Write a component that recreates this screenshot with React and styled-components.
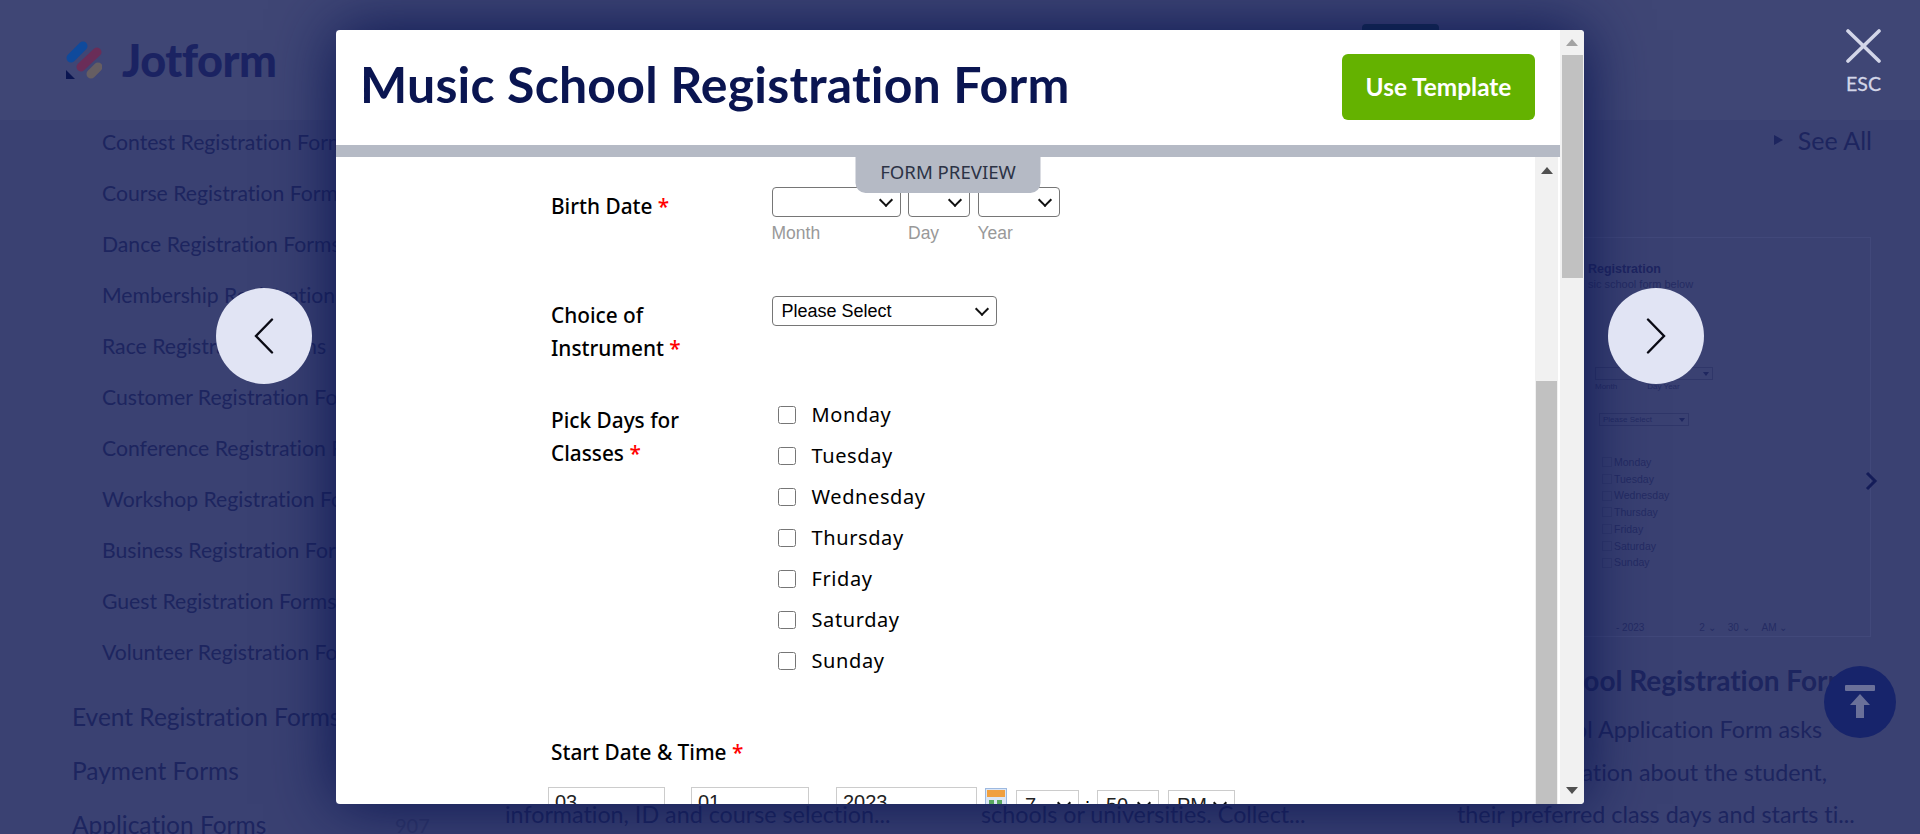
import React from 'react';
import styled, { createGlobalStyle } from 'styled-components';

const GlobalStyle = createGlobalStyle`
  html, body {
    margin: 0;
    height: 100%;
    overflow: hidden;
  }
  * {
    box-sizing: border-box;
  }
`;

const sans = `Lato, 'Noto Sans', sans-serif`;
const ink = '#1d255f';

const Page = styled.div`
  position: relative;
  width: 1920px;
  height: 834px;
  overflow: hidden;
  background: #3a4172;
  color: ${ink};
  font-family: ${sans};
  font-variant-ligatures: none;
`;

/* ---- page behind the popup ---- */

const Header = styled.header`
  height: 120px;
  background: #3f4675;
  display: flex;
  align-items: flex-start;
  justify-content: space-between;
  padding: 41px 481px 0 66px;
`;

const Logo = styled.div`
  display: flex;
  align-items: center;
  gap: 20px;
  height: 38px;
`;

const LogoWord = styled.span`
  font-size: 45px;
  font-weight: 900;
  letter-spacing: -0.5px;
  color: #1b2362;
`;

const SignUp = styled.div`
  width: 77px;
  height: 40px;
  margin-top: -17px;
  border-radius: 4px;
  background: #132c50;
`;

const Body = styled.div`
  display: grid;
  grid-template-columns: 505px 1fr;
`;

const Sidebar = styled.nav`
  display: flex;
  flex-direction: column;
  padding-left: 72px;
`;

const SubItem = styled.div`
  height: 46px;
  margin-bottom: 5px;
  padding-left: 30px;
  line-height: 45px;
  font-size: 21.2px;
  white-space: nowrap;
`;

const TopItem = styled.div`
  display: grid;
  grid-template-columns: 323px auto;
  height: 54px;
  line-height: 54px;
  font-size: 24.5px;
  white-space: nowrap;
  margin-top: ${p => (p.$first ? '9px' : '0')};
`;

const Count = styled.span`
  font-size: 20px;
  color: #2f3669;
`;

const Main = styled.main`
  display: flex;
  flex-direction: column;
`;

const SeeAll = styled.div`
  height: 40px;
  padding-right: 48px;
  display: flex;
  justify-content: flex-end;
  align-items: center;
  gap: 15px;
  font-size: 25px;
`;

const CaretRight = styled.span`
  width: 0;
  height: 0;
  border-left: 9px solid ${ink};
  border-top: 5px solid transparent;
  border-bottom: 5px solid transparent;
`;

const Cards = styled.div`
  display: grid;
  grid-template-columns: repeat(3, 414px);
  column-gap: 62px;
  margin-top: 77px;
`;

const Card = styled.article`
  display: flex;
  flex-direction: column;
`;

const Thumb = styled.div`
  position: relative;
  height: 400px;
  border: 1px solid #41487a;
  padding: 23px 0 0 130px;
  font-family: 'Liberation Sans', sans-serif;
  color: #252c63;
  overflow: hidden;
`;

const ThumbHeading = styled.div`
  font-size: 12.5px;
  font-weight: 700;
  line-height: 16px;
  color: #1e2560;
`;

const ThumbLead = styled.div`
  font-size: 11px;
  line-height: 14px;
  white-space: nowrap;
`;

const ThumbSelect = styled.div`
  display: flex;
  justify-content: flex-end;
  align-items: center;
  width: ${p => p.$width}px;
  height: 13px;
  margin: ${p => p.$margin};
  padding-right: 3px;
  border: 1px solid #2f3669;
  font-size: 8px;
  line-height: 11px;
  &::before {
    content: '${p => p.$label || ''}';
    flex: 1;
    padding-left: 3px;
  }
  &::after {
    content: '';
    border-left: 3px solid transparent;
    border-right: 3px solid transparent;
    border-top: 4px solid #1f2760;
  }
`;

const ThumbSubs = styled.div`
  display: flex;
  gap: 30px;
  margin: 2px 0 0 7px;
  font-size: 8px;
  line-height: 10px;
`;

const ThumbDays = styled.div`
  margin: 28px 0 0 14px;
  font-size: 10.5px;
  line-height: 16.7px;
`;

const ThumbDay = styled.div`
  display: flex;
  align-items: center;
  gap: 2px;
  &::before {
    content: '';
    width: 8px;
    height: 8px;
    border: 1px solid #333a6c;
  }
`;

const ThumbDate = styled.div`
  display: flex;
  align-items: center;
  gap: 12px;
  margin: 51px 0 0 28px;
  font-size: 10px;
  white-space: nowrap;
`;

const ThumbYear = styled.span`
  margin-right: 43px;
`;

const CardChevron = styled.svg`
  position: absolute;
  right: 42px;
  top: 471px;
`;

const CardTitle = styled.h3`
  margin: 23px 0 0;
  height: 40px;
  line-height: 40px;
  font-size: 28px;
  font-weight: 700;
  white-space: nowrap;
  overflow: hidden;
`;

const CardText = styled.div`
  margin-top: 8px;
  font-size: 23.3px;
  line-height: 42.5px;
`;

const CardLine = styled.div`
  white-space: nowrap;
`;

/* ---- popup ---- */

const Modal = styled.div`
  position: absolute;
  left: 336px;
  top: 30px;
  width: 1248px;
  height: 774px;
  display: flex;
  background: #fff;
  border-radius: 4px;
  overflow: hidden;
`;

const ModalShadow = styled.div`
  position: absolute;
  left: 336px;
  top: 30px;
  width: 1248px;
  height: 774px;
  box-shadow: 0 0 60px #0a1551;
`;

const ModalMain = styled.div`
  flex: 1;
  min-width: 0;
  display: flex;
  flex-direction: column;
`;

const ModalHead = styled.div`
  height: 115px;
  display: flex;
  align-items: flex-start;
  justify-content: space-between;
  padding: 24px 25px 0 24px;
`;

const ModalTitle = styled.h1`
  margin: 0;
  font-family: ${sans};
  font-size: 50px;
  font-weight: 700;
  letter-spacing: 0.2px;
  line-height: 60px;
  color: #0a1551;
  white-space: nowrap;
`;

const UseTemplate = styled.button`
  width: 193px;
  height: 66px;
  border: 0;
  border-radius: 6px;
  padding: 0 0 2px;
  background: #64b200;
  color: #fff;
  font-family: ${sans};
  font-size: 24.4px;
  font-weight: 700;
  font-variant-ligatures: none;
`;

const Divider = styled.div`
  position: relative;
  height: 12px;
  background: #b5bac5;
`;

const PreviewTab = styled.div`
  position: absolute;
  z-index: 2;
  top: 100%;
  left: 50%;
  transform: translateX(-50%);
  width: 185px;
  height: 36px;
  border-radius: 0 0 10px 10px;
  background: #b5bac5;
  color: #2c3345;
  font-family: 'Noto Sans', sans-serif;
  font-size: 18.6px;
  line-height: 30px;
  text-align: center;
`;

const FormPane = styled.div`
  flex: 1;
  min-height: 0;
  display: flex;
`;

const Form = styled.div`
  flex: 1;
  padding: 30px 0 0 215px;
  color: #000;
  font-family: 'Noto Sans', sans-serif;
`;

const Row = styled.div`
  display: grid;
  grid-template-columns: 220.5px 1fr;
  height: ${p => p.$height}px;
`;

const Label = styled.div`
  padding-top: ${p => p.$top || 3}px;
  font-size: 20.8px;
  font-weight: 500;
  line-height: 33px;
`;

const Req = styled.span`
  color: #f00;
`;

const Fields = styled.div`
  display: flex;
  gap: 7.5px;
`;

const SubField = styled.div`
  display: flex;
  flex-direction: column;
`;

const SelectBox = styled.div`
  position: relative;
  width: ${p => p.$width}px;
  margin: ${p => p.$margin || '0'};
  flex: none;
  &::after {
    content: '';
    position: absolute;
    right: ${p => p.$arrow || 10}px;
    top: 50%;
    width: 8px;
    height: 8px;
    margin-top: -7px;
    border-right: 2px solid #111;
    border-bottom: 2px solid #111;
    transform: rotate(45deg);
    pointer-events: none;
  }
`;

const Select = styled.select`
  display: block;
  width: 100%;
  height: 30px;
  appearance: none;
  background: #fff;
  color: #000;
  border: 1px solid #767676;
  border-radius: 4px;
  font-family: 'Liberation Sans', sans-serif;
  font-size: 18px;
  padding: 0 9px;
`;

const SubLabel = styled.span`
  margin-top: 4px;
  font-family: 'Liberation Sans', sans-serif;
  font-size: 17.5px;
  line-height: 24px;
  color: #999;
`;

const DayList = styled.div`
  display: flex;
  flex-direction: column;
`;

const Day = styled.label`
  display: flex;
  align-items: center;
  height: 41px;
  padding-left: 6px;
  gap: 16px;
  font-size: 20px;
  letter-spacing: 0.6px;
`;

const Check = styled.input`
  width: 18px;
  height: 18px;
  margin: 0;
`;

const DateRow = styled.div`
  display: flex;
  align-items: flex-start;
  margin-left: -3px;
  margin-top: 18px;
`;

const DateInput = styled.input`
  width: ${p => p.$width}px;
  height: 30px;
  margin-right: ${p => p.$gap}px;
  border: 1px solid #ccc;
  padding: 0 6px;
  font-family: 'Liberation Sans', sans-serif;
  font-size: 20px;
  color: #222;
`;

const CalendarIcon = styled.svg`
  margin: 1px 9px 0 0;
  flex: none;
`;

const TimeSelect = styled(Select)`
  height: 30px;
  color: #222;
  border: 1px solid #ccc;
  border-radius: 0;
  font-size: 20px;
  padding: 0 0 0 8px;
`;

const Colon = styled.span`
  width: 19px;
  margin: 8px 0 0 -1px;
  text-align: center;
  font-family: 'Liberation Sans', sans-serif;
  font-size: 18px;
`;

const Scrollbar = styled.div`
  flex: none;
  width: ${p => p.$width}px;
  display: flex;
  flex-direction: column;
  align-items: center;
  background: #f1f1f1;
`;

const ScrollArrow = styled.div`
  flex: none;
  height: ${p => p.$height}px;
  display: flex;
  align-items: center;
  justify-content: center;
  &::after {
    content: '';
    border-left: 6px solid transparent;
    border-right: 6px solid transparent;
    ${p => (p.$down ? 'border-top' : 'border-bottom')}: 7px solid ${p => p.$color};
  }
`;

const Thumbar = styled.div`
  width: 21px;
  background: #c1c1c1;
  flex: ${p => (p.$height ? `0 0 ${p.$height}px` : '1')};
  margin-top: ${p => p.$offset || 0}px;
`;

const Spring = styled.div`
  flex: 1;
`;

const Gutter = styled.div`
  flex: none;
  width: 2px;
`;

/* ---- controls over the popup ---- */

const RoundNav = styled.button`
  position: absolute;
  top: 288px;
  left: ${p => p.$left}px;
  width: 96px;
  height: 96px;
  padding: 0;
  border: 0;
  border-radius: 50%;
  background: #e1e4f4;
  display: flex;
  align-items: center;
  justify-content: center;
`;

const Close = styled.div`
  position: absolute;
  top: 29px;
  left: 1846px;
  width: 35px;
  display: flex;
  flex-direction: column;
  align-items: center;
  color: #d3d6e8;
  font-family: ${sans};
  font-size: 19.5px;
  font-weight: 400;
`;

const CloseLabel = styled.span`
  margin-top: 11px;
  line-height: 20px;
  -webkit-text-stroke: 0.3px #d3d6e8;
`;

const ToTop = styled.div`
  position: absolute;
  left: 1824px;
  top: 666px;
  width: 72px;
  height: 72px;
  border-radius: 50%;
  background: #17246b;
  display: flex;
  align-items: center;
  justify-content: center;
`;

const subItems = [
  'Contest Registration Forms',
  'Course Registration Forms',
  'Dance Registration Forms',
  'Membership Registration Forms',
  'Race Registration Forms',
  'Customer Registration Forms',
  'Conference Registration Forms',
  'Workshop Registration Forms',
  'Business Registration Forms',
  'Guest Registration Forms',
  'Volunteer Registration Forms',
];

const days = ['Monday', 'Tuesday', 'Wednesday', 'Thursday', 'Friday', 'Saturday', 'Sunday'];

const cards = [
  {
    title: 'Course Registration Form',
    lines: ['A course registration form collects', 'personal and contact details, student', 'information, ID and course selection...'],
  },
  {
    title: 'Class Registration Form',
    lines: ['A class registration form is used by', 'teachers to sign up students at', 'schools or universities. Collect...'],
  },
  {
    title: 'Music School Registration Form',
    lines: ['Music School Application Form asks', 'basic information about the student,', 'their preferred class days and starts ti...'],
  },
];

const JotformMark = () => (
  <svg width="36" height="38" viewBox="0 0 36 38">
    <path d="M5 17 L17 5" stroke="#0f4a9c" strokeWidth="9" strokeLinecap="round" />
    <path d="M15 26 L31 11" stroke="#6a2d58" strokeWidth="9" strokeLinecap="round" />
    <path d="M25 33 L32 26" stroke="#665e62" strokeWidth="9" strokeLinecap="round" />
    <path d="M0 29 L0 38 L9 38 Z" fill="#0a1551" />
  </svg>
);

const Chevron = ({ left }) => (
  <svg width="20" height="36" viewBox="0 0 20 36">
    <polyline
      points={left ? '18,1.5 2,18 18,34.5' : '2,1.5 18,18 2,34.5'}
      fill="none"
      stroke="#0a0a14"
      strokeWidth="2.4"
      strokeLinecap="round"
    />
  </svg>
);

const App = () => (
  <Page>
    <GlobalStyle />
    <Header>
      <Logo>
        <JotformMark />
        <LogoWord>Jotform</LogoWord>
      </Logo>
      <SignUp />
    </Header>
    <Body>
      <Sidebar>
        {subItems.map(item => (
          <SubItem key={item}>{item}</SubItem>
        ))}
        <TopItem $first>Event Registration Forms</TopItem>
        <TopItem>Payment Forms</TopItem>
        <TopItem>
          Application Forms<Count>907</Count>
        </TopItem>
      </Sidebar>
      <Main>
        <SeeAll>
          <CaretRight />
          See All
        </SeeAll>
        <Cards>
          {cards.map((card, i) => (
            <Card key={card.title}>
              <Thumb>
                {i === 2 && (
                  <>
                    <ThumbHeading>Registration</ThumbHeading>
                    <ThumbLead>sic school form below</ThumbLead>
                    <ThumbSelect $width={118} $margin="76px 0 0 7px" />
                    <ThumbSubs>
                      <span>Month</span>
                      <span>Day Year</span>
                    </ThumbSubs>
                    <ThumbSelect $width={90} $margin="21px 0 0 11px" $label="Please Select" />
                    <ThumbDays>
                      {days.map(d => (
                        <ThumbDay key={d}>{d}</ThumbDay>
                      ))}
                    </ThumbDays>
                    <ThumbDate>
                      <ThumbYear>- 2023</ThumbYear>
                      <span>2 ⌄</span>
                      <span>30 ⌄</span>
                      <span>AM ⌄</span>
                    </ThumbDate>
                  </>
                )}
              </Thumb>
              <CardTitle>{card.title}</CardTitle>
              <CardText>
                {card.lines.map(line => (
                  <CardLine key={line}>{line}</CardLine>
                ))}
              </CardText>
            </Card>
          ))}
        </Cards>
      </Main>
    </Body>
    <CardChevron width="14" height="20" viewBox="0 0 14 20">
      <polyline points="3,2 11,10 3,18" fill="none" stroke="#141c58" strokeWidth="3" />
    </CardChevron>

    <ModalShadow />
    <Modal>
      <ModalMain>
        <ModalHead>
          <ModalTitle>Music School Registration Form</ModalTitle>
          <UseTemplate>Use Template</UseTemplate>
        </ModalHead>
        <Divider>
          <PreviewTab>FORM PREVIEW</PreviewTab>
        </Divider>
        <FormPane>
          <Form>
            <Row $height={109}>
              <Label>
                Birth Date <Req>*</Req>
              </Label>
              <Fields>
                <SubField>
                  <SelectBox $width={129}>
                    <Select />
                  </SelectBox>
                  <SubLabel>Month</SubLabel>
                </SubField>
                <SubField>
                  <SelectBox $width={62}>
                    <Select />
                  </SelectBox>
                  <SubLabel>Day</SubLabel>
                </SubField>
                <SubField>
                  <SelectBox $width={82}>
                    <Select />
                  </SelectBox>
                  <SubLabel>Year</SubLabel>
                </SubField>
              </Fields>
            </Row>
            <Row $height={98}>
              <Label>
                Choice of
                <br />
                Instrument <Req>*</Req>
              </Label>
              <div>
                <SelectBox $width={225}>
                  <Select>
                    <option>Please Select</option>
                  </Select>
                </SelectBox>
              </div>
            </Row>
            <Row $height={339}>
              <Label $top={10}>
                Pick Days for
                <br />
                Classes <Req>*</Req>
              </Label>
              <DayList>
                {days.map(d => (
                  <Day key={d}>
                    <Check type="checkbox" />
                    {d}
                  </Day>
                ))}
              </DayList>
            </Row>
            <Label>
              Start Date &amp; Time <Req>*</Req>
            </Label>
            <DateRow>
              <DateInput readOnly value="03" $width={117} $gap={26} />
              <DateInput readOnly value="01" $width={118} $gap={27} />
              <DateInput readOnly value="2023" $width={141} $gap={8} />
              <CalendarIcon width="22" height="24" viewBox="0 0 22 24">
                <rect x="0.5" y="0.5" width="21" height="23" fill="#dbe6f6" stroke="#9db9e0" />
                <rect x="2" y="2" width="18" height="7" fill="#f0a040" />
                <rect x="4" y="12" width="5" height="4" fill="#5aa860" />
                <rect x="12" y="12" width="5" height="4" fill="#5aa860" />
                <rect x="8" y="16" width="5" height="4" fill="#5aa860" />
              </CalendarIcon>
              <SelectBox $width={63} $margin="3px 0 0">
                <TimeSelect>
                  <option>7</option>
                </TimeSelect>
              </SelectBox>
              <Colon>:</Colon>
              <SelectBox $width={62} $margin="3px 9px 0 0">
                <TimeSelect>
                  <option>50</option>
                </TimeSelect>
              </SelectBox>
              <SelectBox $width={67} $margin="3px 0 0">
                <TimeSelect>
                  <option>PM</option>
                </TimeSelect>
              </SelectBox>
            </DateRow>
          </Form>
          <Scrollbar $width={23}>
            <ScrollArrow $height={26} $color="#505050" />
            <Thumbar $offset={198} />
          </Scrollbar>
          <Gutter />
        </FormPane>
      </ModalMain>
      <Scrollbar $width={24}>
        <ScrollArrow $height={25} $color="#a3a3a3" />
        <Thumbar $height={223} />
        <Spring />
        <ScrollArrow $height={28} $color="#505050" $down />
      </Scrollbar>
    </Modal>

    <RoundNav $left={216}>
      <Chevron left />
    </RoundNav>
    <RoundNav $left={1608}>
      <Chevron />
    </RoundNav>
    <Close>
      <svg width="35" height="34" viewBox="0 0 35 34">
        <path d="M2 2 L33 32 M33 2 L2 32" stroke="#d3d6e8" strokeWidth="3.6" strokeLinecap="round" />
      </svg>
      <CloseLabel>ESC</CloseLabel>
    </Close>
    <ToTop>
      <svg width="30" height="34" viewBox="0 0 30 34">
        <rect x="0" y="0" width="30" height="6" rx="1" fill="#6a7099" />
        <path d="M15 9 L25 20 L19 20 L19 33 L11 33 L11 20 L5 20 Z" fill="#6a7099" />
      </svg>
    </ToTop>
  </Page>
);

export default App;
